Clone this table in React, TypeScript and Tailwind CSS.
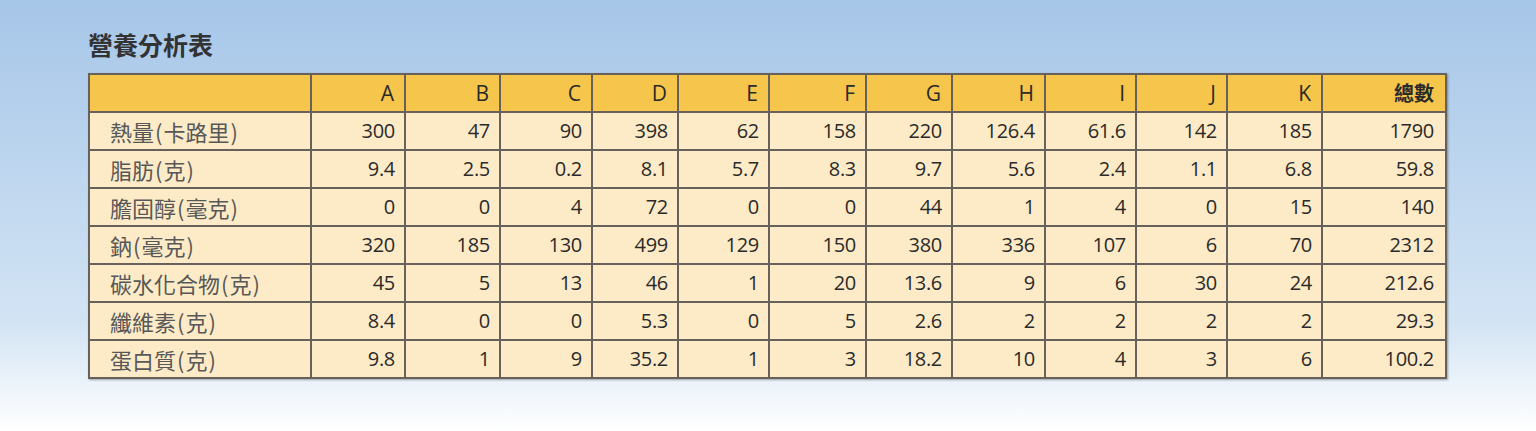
const columns = ['A', 'B', 'C', 'D', 'E', 'F', 'G', 'H', 'I', 'J', 'K']

const rows: { label: string; values: string[] }[] = [
  { label: '熱量(卡路里)', values: ['300', '47', '90', '398', '62', '158', '220', '126.4', '61.6', '142', '185', '1790'] },
  { label: '脂肪(克)', values: ['9.4', '2.5', '0.2', '8.1', '5.7', '8.3', '9.7', '5.6', '2.4', '1.1', '6.8', '59.8'] },
  { label: '膽固醇(毫克)', values: ['0', '0', '4', '72', '0', '0', '44', '1', '4', '0', '15', '140'] },
  { label: '鈉(毫克)', values: ['320', '185', '130', '499', '129', '150', '380', '336', '107', '6', '70', '2312'] },
  { label: '碳水化合物(克)', values: ['45', '5', '13', '46', '1', '20', '13.6', '9', '6', '30', '24', '212.6'] },
  { label: '纖維素(克)', values: ['8.4', '0', '0', '5.3', '0', '5', '2.6', '2', '2', '2', '2', '29.3'] },
  { label: '蛋白質(克)', values: ['9.8', '1', '9', '35.2', '1', '3', '18.2', '10', '4', '3', '6', '100.2'] }
]

// column widths measured from the reference
const colWidths = [
  'w-[222px]',
  'w-[94px]',
  'w-[95px]',
  'w-[92px]',
  'w-[86px]',
  'w-[91px]',
  'w-[97px]',
  'w-[86px]',
  'w-[93px]',
  'w-[91px]',
  'w-[91px]',
  'w-[95px]',
  'w-[124px]'
]

const cjk = "font-['Open_Sans','Noto_Sans_CJK_TC',sans-serif]"

// split "熱量(卡路里)" so the brackets get a little air, as in the print
function Label({ text }: { text: string }) {
  const m = text.match(/^(.*)\((.*)\)$/)
  if (!m) return <>{text}</>
  return (
    <>
      {m[1]}
      <span className="mx-[1px]">(</span>
      {m[2]}
      <span className="mx-[1px]">)</span>
    </>
  )
}

export default function App() {
  return (
    <div className={`h-[431px] w-full bg-gradient-to-b from-[#a6c6e8] via-[#d3e4f4] via-75% to-white ${cjk}`}>
      <div className="pl-[88px] pt-[28px]">
        <h1 className="mb-[13px] text-[25px] font-bold leading-[32px] text-[#333333] font-['Noto_Sans_CJK_TC',sans-serif]">
          營養分析表
        </h1>

        <table className="table-fixed border-collapse shadow-[1px_1px_2px_rgba(0,0,0,0.35)]">
          <colgroup>
            {colWidths.map((w, i) => (
              <col key={i} className={w} />
            ))}
          </colgroup>
          <thead>
            <tr className="h-[38px] bg-[#f5c54c]">
              <th className="border-2 border-[#66615b]"></th>
              {columns.map((c) => (
                <th
                  key={c}
                  className="border-2 border-[#66615b] pr-[10px] text-right text-[21px] font-normal leading-none text-[#2a2a2a]"
                >
                  {c}
                </th>
              ))}
              <th className="border-2 border-[#66615b] pr-[11px] text-right text-[20px] font-bold leading-none text-[#2a2a2a] font-['Noto_Sans_CJK_TC',sans-serif]">
                總數
              </th>
            </tr>
          </thead>
          <tbody>
            {rows.map((row) => (
              <tr key={row.label} className="h-[38px] bg-[#fdebc7]">
                <td className="border-2 border-[#66615b] pl-[20px] text-left text-[22px] leading-none text-[#585858] font-['Noto_Sans_CJK_TC',sans-serif]">
                  <Label text={row.label} />
                </td>
                {row.values.map((v, i) => (
                  <td
                    key={i}
                    className={`border-2 border-[#66615b] text-right text-[20px] leading-none text-[#2a2a2a] tracking-[-0.3px] ${
                      i === row.values.length - 1 ? 'pr-[11px]' : 'pr-[9px]'
                    }`}
                  >
                    {v}
                  </td>
                ))}
              </tr>
            ))}
          </tbody>
        </table>
      </div>
    </div>
  )
}
